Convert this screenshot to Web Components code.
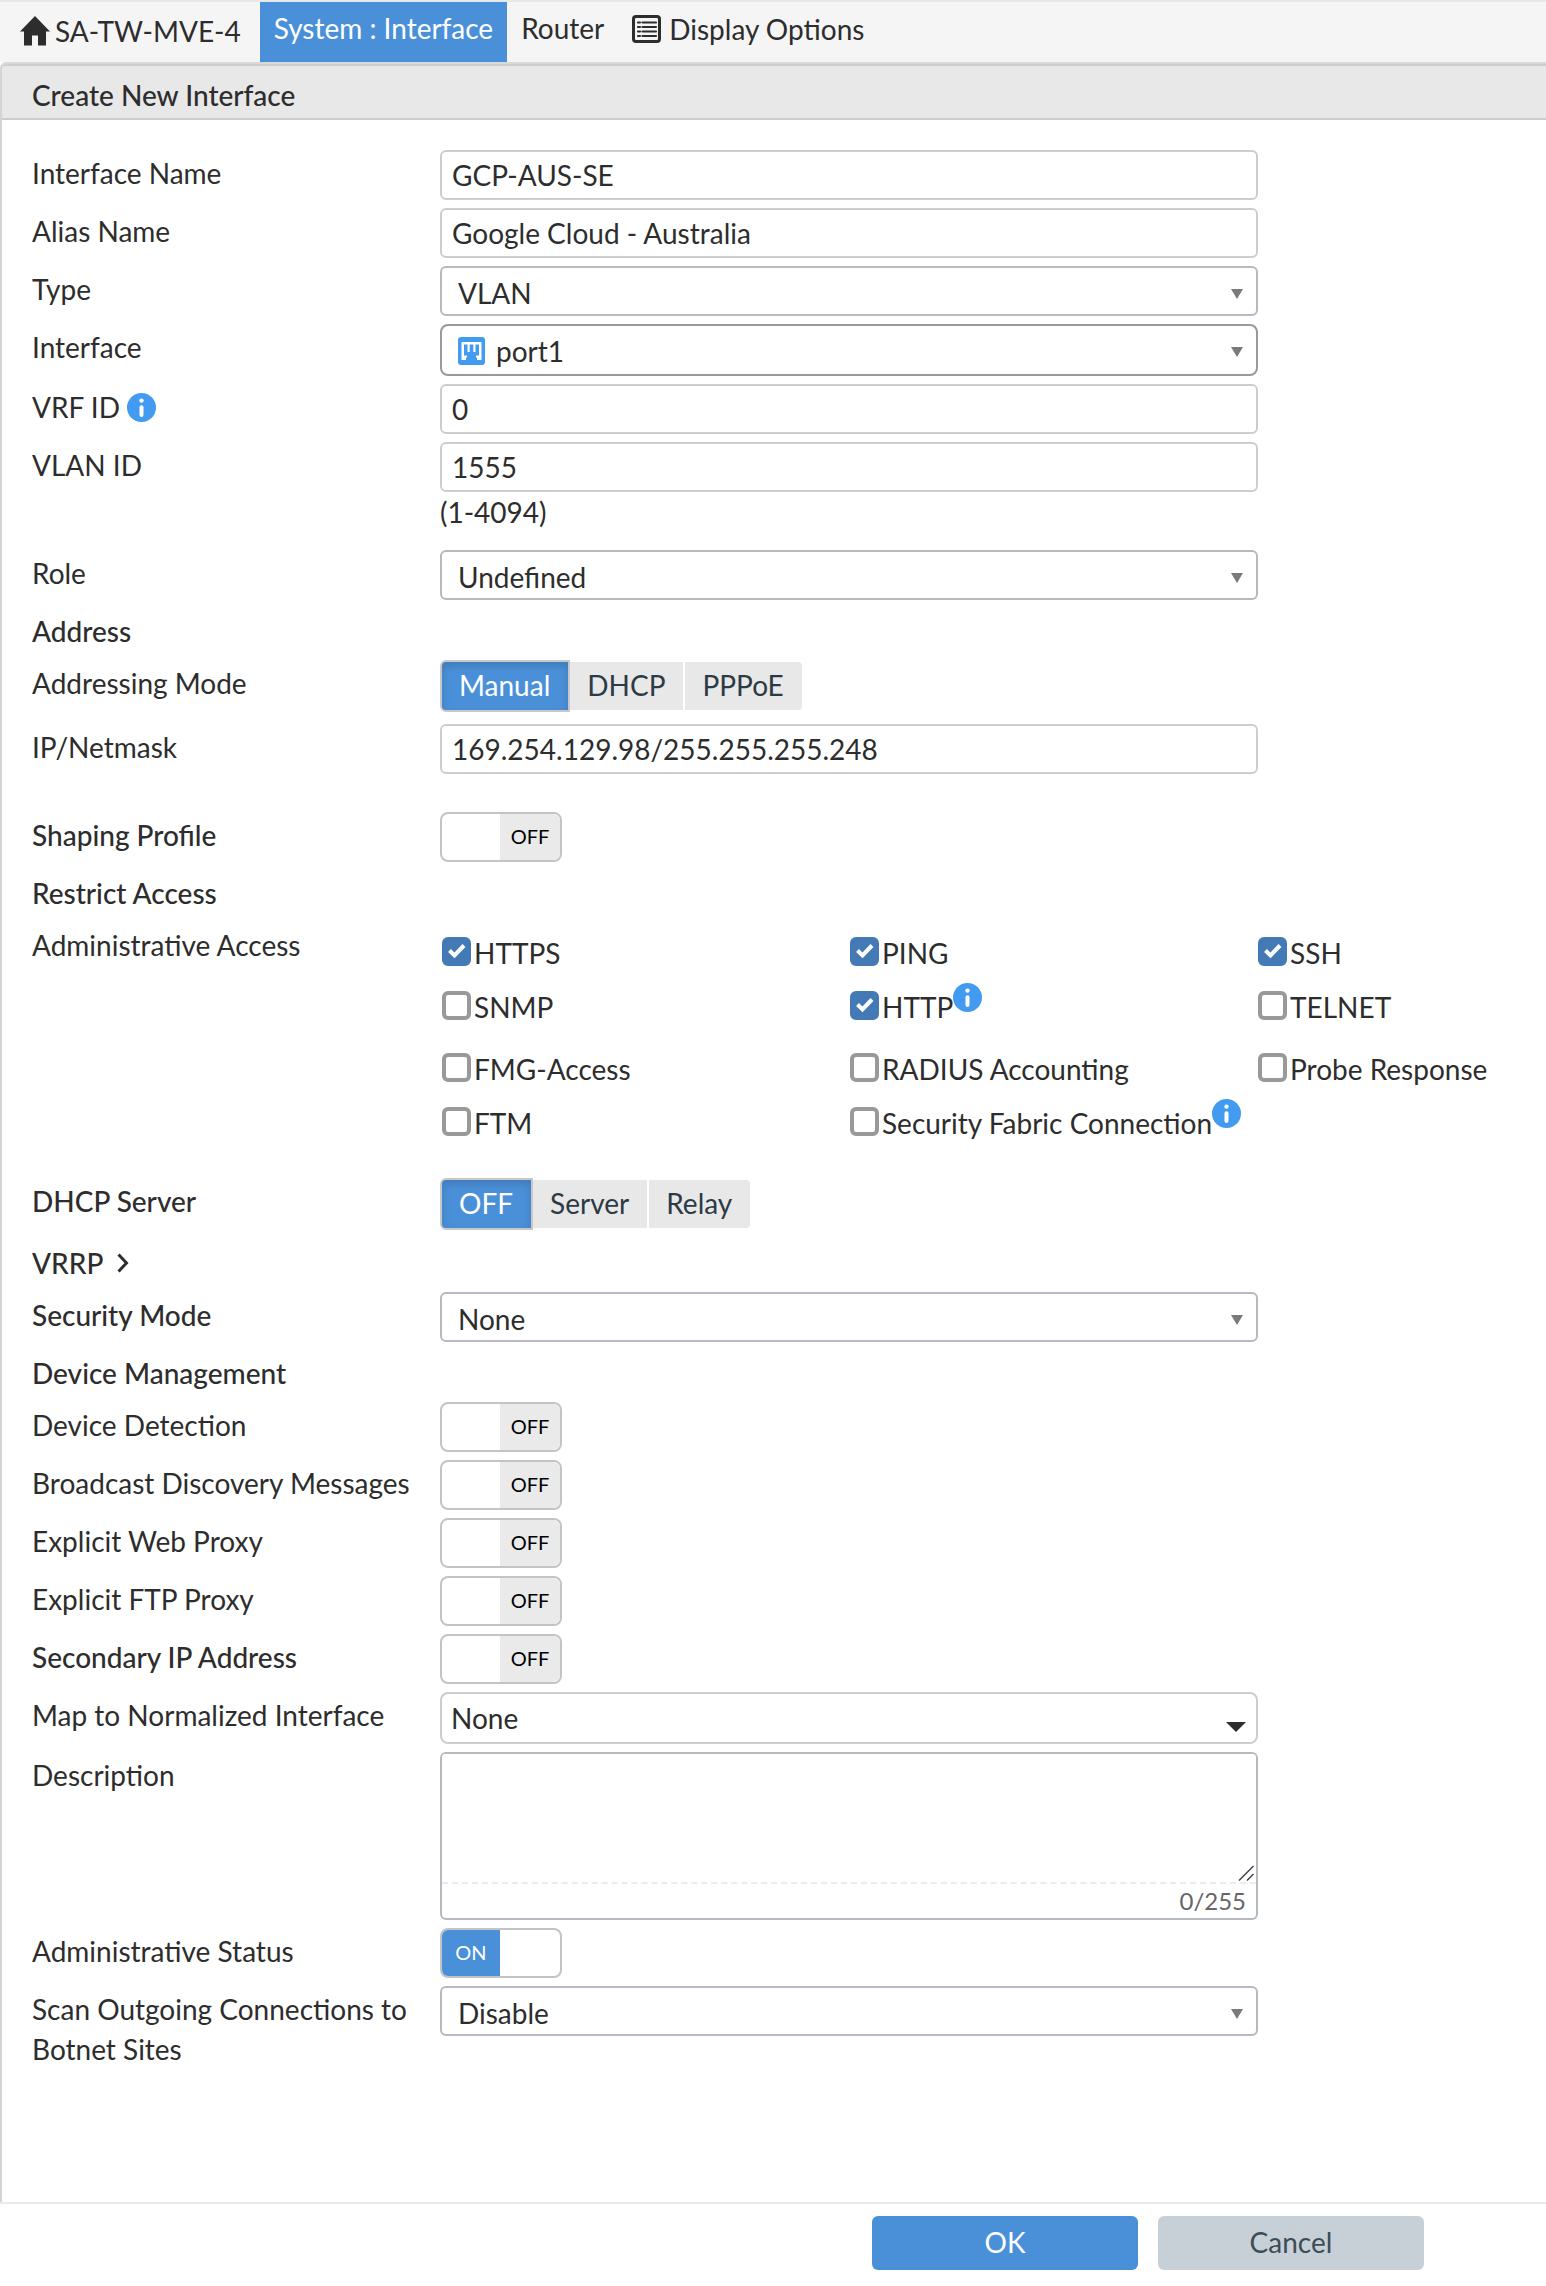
<!DOCTYPE html>
<html lang="en">
<head>
<meta charset="utf-8">
<meta name="viewport" content="width=device-width, initial-scale=1">
<title>Create New Interface</title>
<style>
  body {
    margin: 0;
    background: #fff;
    color: #2d2d2d;
    font: 400 28px/40px Lato, "Liberation Sans", sans-serif;
  }
</style>
</head>
<body>
<app-page>
  <nav-bar slot="nav"></nav-bar>
  <form-panel heading="Create New Interface">
    <text-field label="Interface Name" value="GCP-AUS-SE"></text-field>
    <text-field label="Alias Name" value="Google Cloud - Australia"></text-field>
    <select-field label="Type" value="VLAN"></select-field>
    <select-field label="Interface" value="port1" variant="port"></select-field>
    <text-field label="VRF ID" value="0"><info-icon slot="label-end"></info-icon></text-field>
    <text-field label="VLAN ID" value="1555" hint="(1-4094)"></text-field>
    <select-field label="Role" value="Undefined"></select-field>
    <section-title>Address</section-title>
    <segment-field label="Addressing Mode" options="Manual,DHCP,PPPoE" class="roomy"></segment-field>
    <text-field label="IP/Netmask" value="169.254.129.98/255.255.255.248" spaced></text-field>
    <toggle-field label="Shaping Profile" strong></toggle-field>
    <section-title>Restrict Access</section-title>
    <check-field label="Administrative Access"></check-field>
    <segment-field label="DHCP Server" options="OFF,Server,Relay" strong></segment-field>
    <section-title expandable>VRRP</section-title>
    <select-field label="Security Mode" value="None" strong></select-field>
    <section-title>Device Management</section-title>
    <toggle-field label="Device Detection"></toggle-field>
    <toggle-field label="Broadcast Discovery Messages"></toggle-field>
    <toggle-field label="Explicit Web Proxy"></toggle-field>
    <toggle-field label="Explicit FTP Proxy"></toggle-field>
    <toggle-field label="Secondary IP Address" strong></toggle-field>
    <select-field label="Map to Normalized Interface" value="None" variant="plain"></select-field>
    <area-field label="Description" limit="255"></area-field>
    <toggle-field label="Administrative Status" on></toggle-field>
    <select-field label="Scan Outgoing Connections to Botnet Sites" value="Disable"></select-field>
  </form-panel>
  <action-bar slot="footer"></action-bar>
</app-page>

<script>
const BASE = `
  *, *::before { box-sizing: border-box; }
  svg { display: block; flex: none; }
  button, input, select, textarea { font: inherit; color: inherit; margin: 0; }
`;

const ROW = BASE + `
  :host { display: block; }
  .row { display: grid; grid-template-columns: 400px minmax(0, 1fr); column-gap: 8px; }
  .label { display: flex; align-items: center; gap: 7px; align-self: start; padding-top: 3px; }
  :host([strong]) .label { font-weight: 500; }
  .control { max-width: 818px; min-width: 0; }
`;

class BaseElement extends HTMLElement {
  connectedCallback() {
    if (this.shadowRoot) return;
    this.attachShadow({ mode: 'open' }).innerHTML =
      `<style>${this.styles()}</style>${this.markup()}`;
    this.ready();
  }
  styles() { return BASE; }
  markup() { return '<slot></slot>'; }
  ready() {}
}

class FieldElement extends BaseElement {
  get label() { return this.getAttribute('label'); }
  styles() { return ROW + this.controlStyles(); }
  controlStyles() { return ''; }
  markup() {
    return `<div class="row">
      <div class="label"><label for="c" id="l">${this.label}</label><slot name="label-end"></slot></div>
      <div class="control">${this.control()}</div>
    </div>`;
  }
}

customElements.define('app-page', class extends BaseElement {
  styles() {
    return BASE + `
      :host { display: flex; flex-direction: column; min-height: 100vh; }
      main { flex: 1; display: flex; flex-direction: column; }`;
  }
  markup() {
    return '<slot name="nav"></slot><main><slot></slot></main><slot name="footer"></slot>';
  }
});

customElements.define('nav-bar', class extends BaseElement {
  styles() {
    return BASE + `
      :host { display: block; background: #f5f5f5; border-top: 2px solid #e8e8e8; }
      nav { display: flex; align-items: flex-start; height: 60px; }
      a { display: flex; align-items: center; color: inherit; text-decoration: none; white-space: nowrap; height: 50px; }
      .home { height: 58px; gap: 5px; padding: 0 19px 0 20px; }
      .tab { height: 60px; padding: 0 14px 8px; }
      .tab.active { background: #4a90d9; color: #fff; }
      .options { height: 54px; gap: 8px; padding: 0 14px; }`;
  }
  markup() {
    return `<nav>
      <a class="home" href="#"><svg width="30" height="30" viewBox="0 0 30 30" fill="#2d2d2d"><path d="M15 0 30 15.500H26V29.500H18V19.500H12V29.500H4V15.500H0Z"/></svg>SA-TW-MVE-4</a>
      <a class="tab active" href="#" aria-current="page">System : Interface</a>
      <a class="tab" href="#">Router</a>
      <a class="options" href="#"><svg width="29" height="28" viewBox="0 0 29 28" fill="none" stroke="#2d2d2d"><rect x="1.500" y="1.500" width="26" height="25" rx="2.500" stroke-width="3"/><path d="M6 7.500H8M6 12H8M6 16.500H8M6 21H8M10.500 7.500H24M10.500 12H24M10.500 16.500H24M10.500 21H24" stroke-width="2.200" stroke-linecap="round"/></svg>Display Options</a>
    </nav>`;
  }
});

customElements.define('form-panel', class extends BaseElement {
  styles() {
    return BASE + `
      :host { display: flex; flex-direction: column; flex: 1; border-top: 2px solid #d9d9d9;
              border-left: 2px solid #d4d4d4; border-top-left-radius: 6px; }
      h1 { margin: 0; padding: 6px 30px 0; font-size: 28px; font-weight: 500; line-height: 46px;
           background: #e8e8e8; border-top: 2px solid #cdcdcd; border-bottom: 2px solid #cdcdcd;
           border-top-left-radius: 4px; }
      form { display: flex; flex-direction: column; gap: 8px; padding: 30px; }`;
  }
  markup() {
    return `<h1>${this.getAttribute('heading')}</h1><form><slot></slot></form>`;
  }
});

customElements.define('info-icon', class extends BaseElement {
  styles() { return BASE + ':host { display: block; flex: none; }'; }
  markup() {
    return `<svg width="29" height="29" viewBox="0 0 29 29" role="img" aria-label="Info"><circle cx="14.500" cy="14.500" r="14.500" fill="#429bf0"/><circle cx="14.500" cy="7.600" r="2.200" fill="#fff"/><path d="M14.500 14.300V22" stroke="#fff" stroke-width="4" stroke-linecap="round"/></svg>`;
  }
});

customElements.define('section-title', class extends BaseElement {
  styles() {
    return BASE + `
      :host { display: block; font-weight: 500; padding: 3px 0 1px; }
      :host([expandable]) { padding: 5px 0 1px; }
      h2 { margin: 0; font: inherit; }
      button { display: flex; align-items: center; gap: 14px; padding: 0; border: 0; background: none; line-height: 40px; }`;
  }
  markup() {
    return this.hasAttribute('expandable')
      ? `<h2><button type="button" aria-expanded="false"><slot></slot><svg width="12" height="20" viewBox="0 0 12 20" fill="none" stroke="#2d2d2d" stroke-width="3"><path d="M1.500 1.500 9.500 10 1.500 18.500"/></svg></button></h2>`
      : '<h2><slot></slot></h2>';
  }
});

customElements.define('text-field', class extends FieldElement {
  controlStyles() {
    return `
      :host([spaced]) { padding-bottom: 30px; }
      input { display: block; width: 100%; height: 50px; padding: 0 10px; background: #fff;
              border: 2px solid #cdcdcd; border-radius: 6px; outline: 0; }
      .hint { display: block; padding-bottom: 10px; }`;
  }
  control() {
    const hint = this.getAttribute('hint');
    return `<input id="c" type="text" value="${this.getAttribute('value')}">` +
      (hint ? `<span class="hint">${hint}</span>` : '');
  }
});

customElements.define('select-field', class extends FieldElement {
  controlStyles() {
    return `
      .box { display: grid; }
      .box > * { grid-area: 1 / 1; }
      select { appearance: none; width: 100%; height: 50px; padding: 4px 40px 0 16px; background: #fff;
               border: 2px solid #b4babf; border-radius: 6px; outline: 0; }
      svg { pointer-events: none; }
      .arrow { place-self: center end; margin: 6px 15px 0 0; }
      .port select { height: 52px; padding: 2px 40px 0 54px; border-color: #999; border-radius: 8px; }
      .port .icon { place-self: center start; margin: 2px 0 0 18px; }
      .plain select { height: 52px; padding: 0 40px 0 9px; border-color: #cdcdcd; border-radius: 8px; }
      .plain .arrow { margin: 18px 12px 0 0; }
      .port .arrow { margin-top: 4px; }`;
  }
  control() {
    const variant = this.getAttribute('variant') || '';
    const icon = variant === 'port'
      ? `<svg class="icon" width="27" height="28" viewBox="0 0 27 28"><rect width="27" height="28" rx="3" fill="#429bf0"/><path d="M3.500 5H23.500V23H3.500Z" fill="#fff"/><path d="M6 7.500H9.500V15H11.700V7.500H15.300V15H17.500V7.500H21V18.500H18V20.500H19V23.500H8V20.500H9V18.500H6Z" fill="#429bf0"/></svg>` : '';
    const arrow = variant === 'plain'
      ? '<svg class="arrow" width="20" height="10" viewBox="0 0 20 10"><path d="M0 0H20L10 10Z" fill="#2d2d2d"/></svg>'
      : '<svg class="arrow" width="12" height="10" viewBox="0 0 12 10"><path d="M0 0H12L6 10Z" fill="#7a7a7a"/></svg>';
    return `<div class="box ${variant}"><select id="c"><option>${this.getAttribute('value')}</option></select>${icon}${arrow}</div>`;
  }
});

customElements.define('segment-field', class extends FieldElement {
  controlStyles() {
    return `
      :host(.roomy) { padding-bottom: 4px; }
      .group { display: flex; }
      button { height: 52px; padding: 0 18px 2px 17px; border: 2px solid transparent; background: #e8e8e8 padding-box;
               color: #2c3a45; line-height: 40px; }
      button + button { margin-left: -2px; }
      button:first-child { border-radius: 6px 0 0 6px; }
      button:last-child { border-radius: 0 6px 6px 0; }
      button[aria-pressed="true"] { position: relative; border-color: #c8c8c8; background: #4a90d9; color: #fff;
               box-shadow: inset 0 4px 8px rgba(0, 0, 0, .15); }`;
  }
  markup() { return super.markup().replace('<label for="c" id="l">', '<span id="l">').replace('</label>', '</span>'); }
  control() {
    const items = this.getAttribute('options').split(',');
    return `<div class="group" role="group" aria-labelledby="l">` +
      items.map((t, i) => `<button type="button" aria-pressed="${i === 0}">${t}</button>`).join('') + '</div>';
  }
  ready() {
    const buttons = [...this.shadowRoot.querySelectorAll('button')];
    buttons.forEach(b => b.addEventListener('click', () =>
      buttons.forEach(o => o.setAttribute('aria-pressed', o === b))));
  }
});

customElements.define('toggle-field', class extends FieldElement {
  controlStyles() {
    return `
      button { display: grid; grid-template-columns: 58px 60px; width: 122px; height: 50px; padding: 0; overflow: hidden;
               border: 2px solid #c4c4c4; border-radius: 8px; background: #fff; font-size: 20px; line-height: 44px; text-align: center; }
      span { height: 46px; }
      .off { grid-column: 2; background: #eaeaea; color: #000; }
      .on { background: #4a90d9; color: #fff; }
      button[aria-checked="true"] .off, button[aria-checked="false"] .on { display: none; }`;
  }
  control() {
    return `<button id="c" type="button" role="switch" aria-labelledby="l" aria-checked="${this.hasAttribute('on')}"><span class="on">ON</span><span class="off">OFF</span></button>`;
  }
  ready() {
    const b = this.shadowRoot.querySelector('button');
    b.addEventListener('click', () =>
      b.setAttribute('aria-checked', b.getAttribute('aria-checked') !== 'true'));
  }
});

customElements.define('check-item', class extends BaseElement {
  styles() {
    return BASE + `
      :host { display: flex; align-items: flex-start; height: 44px; white-space: nowrap; }
      .box { display: grid; margin: 8px 3px 0 2px; }
      .box > * { grid-area: 1 / 1; }
      input { appearance: none; width: 29px; height: 29px; border: 4px solid #999; border-radius: 6px; background: #fff; }
      input:checked { border-color: #437ab5; background: #437ab5; }
      svg { pointer-events: none; visibility: hidden; }
      input:checked + svg { visibility: visible; }
      label { padding-top: 4px; }`;
  }
  markup() {
    return `<span class="box"><input id="c" type="checkbox" ${this.hasAttribute('checked') ? 'checked' : ''}><svg width="29" height="29" viewBox="0 0 29 29" fill="none" stroke="#fff" stroke-width="4"><path d="M7.500 13.500 12.500 18.500 22 8.500"/></svg></span><label for="c">${this.getAttribute('label')}</label>${this.hasAttribute('info') ? '<info-icon></info-icon>' : ''}`;
  }
});

customElements.define('check-field', class extends FieldElement {
  controlStyles() {
    return `
      .groups { display: flex; flex-direction: column; gap: 18px; padding: 7px 0 27px; }
      .group { display: grid; grid-template-columns: 408px 408px minmax(0, 1fr); row-gap: 10px; }
      .control { max-width: none; }`;
  }
  markup() { return super.markup().replace('<label for="c" id="l">', '<span id="l">').replace('</label>', '</span>'); }
  control() {
    return `<div class="groups" role="group" aria-labelledby="l">
      <div class="group">
        <check-item label="HTTPS" checked></check-item>
        <check-item label="PING" checked></check-item>
        <check-item label="SSH" checked></check-item>
        <check-item label="SNMP"></check-item>
        <check-item label="HTTP" checked info></check-item>
        <check-item label="TELNET"></check-item>
      </div>
      <div class="group">
        <check-item label="FMG-Access"></check-item>
        <check-item label="RADIUS Accounting"></check-item>
        <check-item label="Probe Response"></check-item>
        <check-item label="FTM"></check-item>
        <check-item label="Security Fabric Connection" info></check-item>
      </div>
    </div>`;
  }
});

customElements.define('area-field', class extends FieldElement {
  controlStyles() {
    return `
      .area { border: 2px solid #b4babf; border-radius: 6px; overflow: hidden; }
      .edit { display: grid; border-bottom: 2px dashed #e8ecec; }
      .edit > * { grid-area: 1 / 1; }
      textarea { display: block; width: 100%; height: 128px; padding: 6px 10px; border: 0; outline: 0; resize: none; background: #fff; }
      svg { place-self: end; margin: 0 2px 1px 0; pointer-events: none; }
      .count { display: block; padding-right: 10px; text-align: right; font-size: 24px; line-height: 34px; color: #666; }`;
  }
  control() {
    const limit = this.getAttribute('limit');
    return `<div class="area"><div class="edit"><textarea id="c" maxlength="${limit}"></textarea><svg width="16" height="16" viewBox="0 0 16 16" stroke="#444" stroke-width="1.500"><path d="M1 15.500 15.500 1M9 15.500 15.500 9"/></svg></div><span class="count">0/${limit}</span></div>`;
  }
});

customElements.define('action-bar', class extends BaseElement {
  styles() {
    return BASE + `
      :host { display: flex; justify-content: flex-end; gap: 20px; padding: 12px 122px 16px 20px; border-top: 2px solid #e9e9e9; background: #fff; }
      button { width: 266px; height: 54px; padding: 0 0 2px; border: 0; border-radius: 6px; background: #c8d0d7; color: #3b4d57; }
      .primary { background: #4a90d9; color: #fff; }`;
  }
  markup() {
    return '<button class="primary" type="button">OK</button><button type="button">Cancel</button>';
  }
});
</script>
</body>
</html>
